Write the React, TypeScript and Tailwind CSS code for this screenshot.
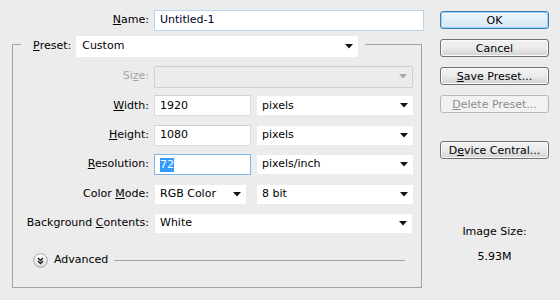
import React from "react";

const font = { fontFamily: '"DejaVu Sans", Verdana, sans-serif' };

function Arrow({ gray = false }: { gray?: boolean }) {
  return (
    <svg width="8" height="5" viewBox="0 0 8 5" className="shrink-0">
      <polygon points="0,0 8,0 4,4.5" fill={gray ? "#a8a8a8" : "#111"} />
    </svg>
  );
}

function Select({ value, w }: { value: string; w: string }) {
  return (
    <div className={`${w} h-[21px] bg-white border border-[#ececec] flex items-center justify-between pl-[5px] pr-[5px]`}>
      <span>{value}</span>
      <Arrow />
    </div>
  );
}

function Input({ value, w, focused = false }: { value: string; w: string; focused?: boolean }) {
  return (
    <div
      className={`${w} h-[21px] bg-white border ${focused ? "border-[#7eb4ea]" : "border-[#dcdcdc] border-t-[#d0d0d0]"} flex items-center pl-[5px]`}
    >
      {focused ? <span className="bg-[#3399ff] text-white leading-[14px]">{value}</span> : <span>{value}</span>}
    </div>
  );
}

function Label({ children }: { children: React.ReactNode }) {
  return <div className="w-[137px] text-right pr-[1px] shrink-0 whitespace-nowrap">{children}</div>;
}

function Btn({ children, primary = false, disabled = false }: { children: React.ReactNode; primary?: boolean; disabled?: boolean }) {
  const cls = disabled
    ? "border-[#b5b8ba] bg-[#f2f2f2] text-[#8d8d8d]"
    : primary
    ? "border-[#3c7fb1] bg-gradient-to-b from-[#f0f7fc] to-[#d4e6f3] text-black shadow-[inset_0_0_0_1px_#9fd0ef]"
    : "border-[#707070] bg-gradient-to-b from-[#f2f2f2] via-[#ebebeb] to-[#d2d2d2] text-black shadow-[inset_0_0_0_1px_#fbfbfb]";
  return (
    <div className={`h-[18px] w-[109px] rounded-[3px] border ${cls} flex items-center justify-center leading-none`}>
      {children}
    </div>
  );
}

export default function App() {
  return (
    <div className="w-[560px] h-[300px] bg-[#ececec] text-[11px] text-black flex" style={font}>
      <div className="w-[440px] pl-[12px] pt-[10px] flex flex-col">
        <div className="flex items-center gap-[4px] h-[21px]">
          <div className="w-[138px] text-right pr-[1px]">
            <u>N</u>ame:
          </div>
          <div className="w-[270px] h-[21px] bg-white border border-[#b9d3ec] flex items-center pl-[5px] text-[#000022]">
            Untitled-1
          </div>
        </div>
        <fieldset className="mt-[5px] w-[410px] h-[252px] border border-[#a3a3a3] min-w-0">
          <legend className="ml-[8px] pl-[12px] pr-[7px] h-[16px]">
            <div className="flex items-start gap-[5px]">
              <div className="h-[21px] flex items-center">
                <u>P</u>reset:
              </div>
              <div className="w-[282px] h-[21px] bg-white flex items-center justify-between pl-[6px] pr-[5px]">
                <span>Custom</span>
                <Arrow />
              </div>
            </div>
          </legend>
          <div className="pt-[14px] flex flex-col gap-[8.4px]">
            <div className="flex items-center gap-[4px] h-[21px]">
              <Label>
                <span className="text-[#a6a6a6]">
                  Si<u>z</u>e:
                </span>
              </Label>
              <div className="w-[259px] h-[22px] bg-[#ececec] border border-[#cfcfcf] rounded-[2px] flex items-center justify-end pr-[5px]">
                <Arrow gray />
              </div>
            </div>
            <div className="flex items-center gap-[4px] h-[21px]">
              <Label>
                <u>W</u>idth:
              </Label>
              <Input value="1920" w="w-[97px]" />
              <div className="ml-[1px]">
                <Select value="pixels" w="w-[158px]" />
              </div>
            </div>
            <div className="flex items-center gap-[4px] h-[21px]">
              <Label>
                <u>H</u>eight:
              </Label>
              <Input value="1080" w="w-[97px]" />
              <div className="ml-[1px]">
                <Select value="pixels" w="w-[158px]" />
              </div>
            </div>
            <div className="flex items-center gap-[4px] h-[21px]">
              <Label>
                <u>R</u>esolution:
              </Label>
              <Input value="72" w="w-[97px]" focused />
              <div className="ml-[1px]">
                <Select value="pixels/inch" w="w-[158px]" />
              </div>
            </div>
            <div className="flex items-center gap-[4px] h-[21px]">
              <Label>
                Color <u>M</u>ode:
              </Label>
              <Select value="RGB Color" w="w-[93px]" />
              <div className="ml-[5px]">
                <Select value="8 bit" w="w-[158px]" />
              </div>
            </div>
            <div className="flex items-center gap-[4px] h-[21px]">
              <Label>
                Background <u>C</u>ontents:
              </Label>
              <Select value="White" w="w-[259px]" />
            </div>
          </div>
          <div className="mt-[19px] ml-[20px] flex items-center h-[15px]">
            <svg width="15" height="15" viewBox="0 0 15 15">
              <defs>
                <linearGradient id="cg" x1="0" y1="0" x2="0" y2="1">
                  <stop offset="0" stopColor="#ffffff" />
                  <stop offset="1" stopColor="#dedede" />
                </linearGradient>
              </defs>
              <circle cx="7.5" cy="7.5" r="6.8" fill="url(#cg)" stroke="#a5a5a5" strokeWidth="1" />
              <path d="M5 5 L7.5 7.5 L10 5 M5 8 L7.5 10.5 L10 8" fill="none" stroke="#1a1a1a" strokeWidth="1.3" />
            </svg>
            <span className="ml-[6px]">Advanced</span>
            <div className="ml-[6px] flex-1 mr-[16px] h-[1px] bg-[#a3a3a3]" />
          </div>
        </fieldset>
      </div>
      <div className="w-[109px] pt-[11px] flex flex-col">
        <Btn primary>OK</Btn>
        <div className="mt-[10px]">
          <Btn>Cancel</Btn>
        </div>
        <div className="mt-[10px]">
          <Btn>
            <span>
              <u>S</u>ave Preset...
            </span>
          </Btn>
        </div>
        <div className="mt-[10px]">
          <Btn disabled>
            <span>
              <u>D</u>elete Preset...
            </span>
          </Btn>
        </div>
        <div className="mt-[28px]">
          <Btn>
            <span>
              D<u>e</u>vice Central...
            </span>
          </Btn>
        </div>
        <div className="mt-[66px] text-center leading-[14px]">Image Size:</div>
        <div className="mt-[11px] text-center leading-[14px]">5.93M</div>
      </div>
    </div>
  );
}
